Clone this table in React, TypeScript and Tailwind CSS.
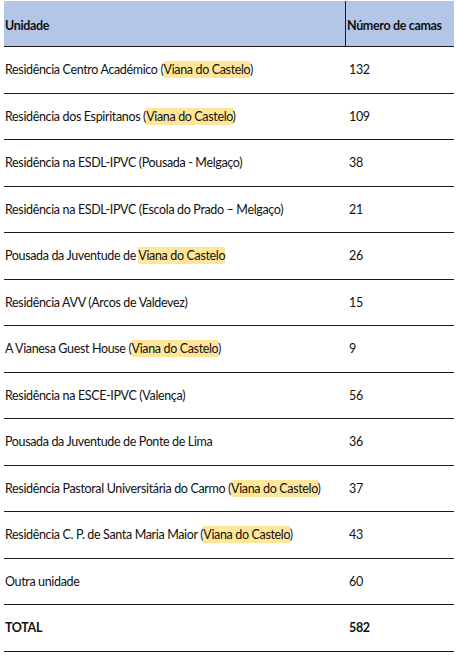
import React from 'react';

type Row = { name: string; place?: string; tail?: string; beds: string; bold?: boolean };

const rows: Row[] = [
  { name: 'Residência Centro Académico (', place: 'Viana do Castelo', tail: ')', beds: '132' },
  { name: 'Residência dos Espiritanos (', place: 'Viana do Castelo', tail: ')', beds: '109' },
  { name: 'Residência na ESDL-IPVC (Pousada - Melgaço)', beds: '38' },
  { name: 'Residência na ESDL-IPVC (Escola do Prado – Melgaço)', beds: '21' },
  { name: 'Pousada da Juventude de ', place: 'Viana do Castelo', beds: '26' },
  { name: 'Residência AVV (Arcos de Valdevez)', beds: '15' },
  { name: 'A Vianesa Guest House (', place: 'Viana do Castelo', tail: ')', beds: '9' },
  { name: 'Residência na ESCE-IPVC (Valença)', beds: '56' },
  { name: 'Pousada da Juventude de Ponte de Lima', beds: '36' },
  { name: 'Residência Pastoral Universitária do Carmo (', place: 'Viana do Castelo', tail: ')', beds: '37' },
  { name: 'Residência C. P. de Santa Maria Maior (', place: 'Viana do Castelo', tail: ')', beds: '43' },
  { name: 'Outra unidade', beds: '60' },
  { name: 'TOTAL', beds: '582', bold: true },
];

export default function App() {
  return (
    <div className="min-h-[668px] bg-white pt-px pl-1 pr-0.5 text-[12.5px] tracking-[-0.35px] text-[#111] font-['Lato','Open_Sans',sans-serif] whitespace-nowrap">
      <div className="w-[450px]">
        {/* Header */}
        <div className="flex h-[46px] bg-[#b4c6e7] border-b-[1.5px] border-[#1a1a1a] font-bold">
          <div className="flex w-[342px] items-center border-r-[1.5px] border-[#1a1a1a] pl-px pt-[5px]">Unidade</div>
          <div className="flex flex-1 items-center pl-px pt-[5px]">Número de camas</div>
        </div>
        {rows.map((r) => (
          <div key={r.name} className={`flex h-[46.5px] border-b-[1.5px] border-[#1a1a1a] pt-[2px] ${r.bold ? 'font-bold' : ''}`}>
            <div className="flex w-[342px] items-center pl-px">
              <span>
                {r.name}
                {r.place && <span className="bg-[#ffe699] py-px">{r.place}</span>}
                {r.tail}
              </span>
            </div>
            <div className="flex flex-1 items-center pl-[3px]">{r.beds}</div>
          </div>
        ))}
      </div>
    </div>
  );
}
